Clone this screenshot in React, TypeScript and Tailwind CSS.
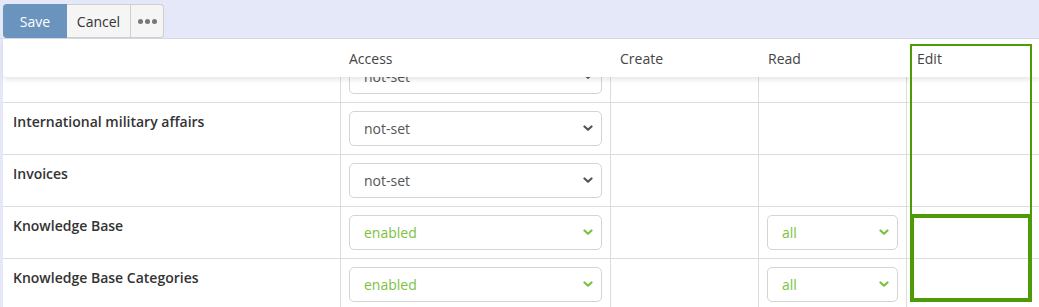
const rows = [
  { name: "Interventions", access: "not-set", read: null },
  { name: "International military affairs", access: "not-set", read: null },
  { name: "Invoices", access: "not-set", read: null },
  { name: "Knowledge Base", access: "enabled", read: "all" },
  { name: "Knowledge Base Categories", access: "enabled", read: "all" },
];

const Chevron = ({ green }: { green: boolean }) => (
  <svg width="10" height="7" viewBox="0 0 10 7" className="shrink-0">
    <path
      d="M1.5 1.5 L5 4.8 L8.5 1.5"
      fill="none"
      stroke={green ? "#7cc242" : "#555555"}
      strokeWidth="2.2"
      strokeLinecap="round"
      strokeLinejoin="round"
    />
  </svg>
);

const FakeSelect = ({ value }: { value: string }) => {
  const green = value !== "not-set";
  return (
    <div className="h-[35px] w-full rounded-[5px] border border-[#d4d4d4] bg-white flex items-center justify-between pl-[14px] pr-[8px]">
      <span className={green ? "text-[#7cc242]" : "text-[#555]"}>{value}</span>
      <Chevron green={green} />
    </div>
  );
};

export default function App() {
  return (
    <div className="relative w-[1039px] h-[307px] overflow-hidden bg-[#e4e8f8] text-[14px] font-['Open_Sans',sans-serif]">
      {/* toolbar */}
      <div className="h-[39px] border-b border-[#d3d7e6] pl-[3px] pt-[4px] flex">
        <div className="flex h-[34px]">
          <button className="w-[64px] bg-[#6a93bd] text-white rounded-l-[4px]">Save</button>
          <button className="w-[64px] bg-[#f5f5f5] text-[#333] border border-[#cfcfcf] border-l-0">Cancel</button>
          <button className="w-[33px] bg-[#f5f5f5] border border-[#cfcfcf] border-l-0 rounded-r-[4px] flex items-center justify-center gap-[2px]">
            <span className="w-[5px] h-[5px] rounded-full bg-[#777]" />
            <span className="w-[5px] h-[5px] rounded-full bg-[#777]" />
            <span className="w-[5px] h-[5px] rounded-full bg-[#777]" />
          </button>
        </div>
      </div>

      {/* table */}
      <div className="ml-[3px] bg-white h-full text-[#333]">
        <div className="relative z-10 h-[38px] bg-white grid grid-cols-[337px_270px_148px_148px_1fr] items-center text-[#444] shadow-[0_3px_5px_rgba(0,0,0,0.09)] rounded-bl-[3px]">
          <div />
          <div className="pl-[9px]">Access</div>
          <div className="pl-[10px]">Create</div>
          <div className="pl-[10px]">Read</div>
          <div className="pl-[11px]">Edit</div>
        </div>
        {rows.map((r, i) => (
          <div
            key={r.name}
            className={
              "h-[52px] grid grid-cols-[337px_270px_148px_148px_1fr] border-b border-[#dcdcdc] " +
              (i === 0 ? "-mt-[26px]" : "")
            }
          >
            <div className="pl-[10px] pt-[8px] font-semibold text-[#333]">{r.name}</div>
            <div className="border-l border-[#dcdcdc] px-[8px] pt-[8px]">
              <FakeSelect value={r.access} />
            </div>
            <div className="border-l border-[#dcdcdc]" />
            <div className="border-l border-[#dcdcdc] px-[8px] pt-[8px]">
              {r.read && <FakeSelect value={r.read} />}
            </div>
            <div className="border-l border-[#dcdcdc]" />
          </div>
        ))}
      </div>

      {/* highlight boxes over the Edit column */}
      <div className="absolute left-[910px] top-[44px] w-[122px] h-[172px] border-2 border-[#4f9b07] z-20" />
      <div className="absolute left-[910px] top-[214px] w-[122px] h-[88px] border-4 border-[#4f9b07] z-20" />
    </div>
  );
}
